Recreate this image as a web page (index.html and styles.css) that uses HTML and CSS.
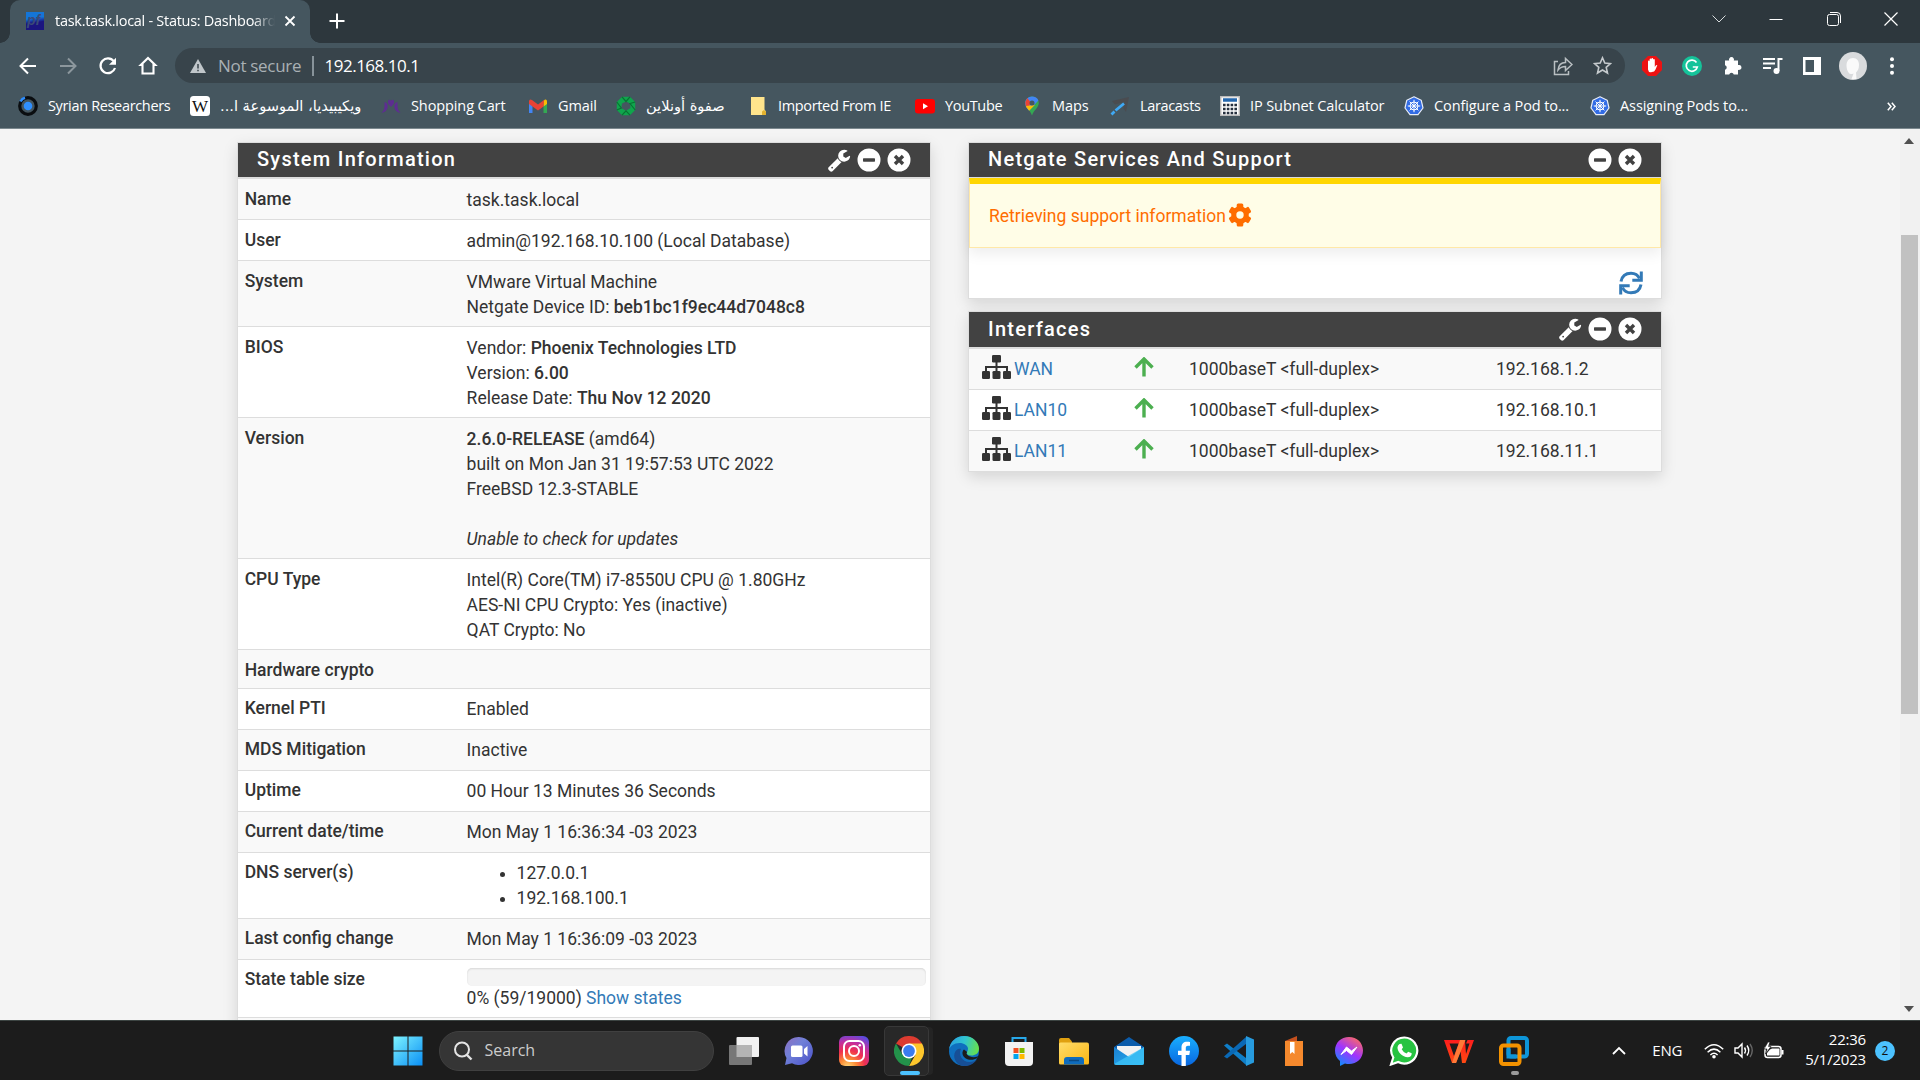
FILE: index.html
```html
<!DOCTYPE html>
<html lang="en">
<head>
<meta charset="utf-8">
<title>task.task.local - Status: Dashboard</title>
<link rel="stylesheet" href="styles.css">
</head>
<body>
<svg class="sprite" aria-hidden="true">
  <defs>
    <linearGradient id="g-win" x1="0" y1="0" x2="1" y2="1"><stop offset="0" stop-color="#7df3ff"/><stop offset="1" stop-color="#0a8ff5"/></linearGradient>
    <linearGradient id="g-chat" x1="0" y1="0" x2="1" y2="1"><stop offset="0" stop-color="#8f6fc0"/><stop offset=".4" stop-color="#7080d8"/><stop offset="1" stop-color="#4a50c8"/></linearGradient>
    <radialGradient id="g-insta" cx=".3" cy="1.05" r="1.15"><stop offset="0" stop-color="#ffdc7d"/><stop offset=".25" stop-color="#fb8c35"/><stop offset=".5" stop-color="#f0304f"/><stop offset=".75" stop-color="#c22fa0"/><stop offset="1" stop-color="#5a4be0"/></radialGradient>
    <linearGradient id="g-edge" x1="0" y1=".3" x2="1" y2=".5"><stop offset="0" stop-color="#2a9fe0"/><stop offset=".5" stop-color="#30c5cf"/><stop offset="1" stop-color="#66e04d"/></linearGradient>
    <linearGradient id="g-folder" x1="0" y1="0" x2="1" y2="1"><stop offset="0" stop-color="#ffdc6a"/><stop offset="1" stop-color="#fbb713"/></linearGradient>
    <linearGradient id="g-mail" x1="0" y1="0" x2="1" y2="1"><stop offset="0" stop-color="#1b7fd0"/><stop offset="1" stop-color="#27b1f2"/></linearGradient>
    <linearGradient id="g-fb" x1="0" y1="0" x2="0" y2="1"><stop offset="0" stop-color="#19afff"/><stop offset="1" stop-color="#0866e0"/></linearGradient>
    <linearGradient id="g-mess" x1=".2" y1="1" x2=".8" y2="0"><stop offset="0" stop-color="#0a8fff"/><stop offset=".5" stop-color="#a033ff"/><stop offset="1" stop-color="#ff6b60"/></linearGradient>
    <linearGradient id="g-pf" x1="0" y1="0" x2=".15" y2="1"><stop offset=".4" stop-color="#1475d8"/><stop offset=".65" stop-color="#1b1580"/></linearGradient>
    <linearGradient id="g-wps" x1="0" y1="0" x2="0" y2="1"><stop offset="0" stop-color="#ff1d1d"/><stop offset="1" stop-color="#ff4a12"/></linearGradient>
  </defs>
  <symbol id="wrench" viewBox="0 0 1792 1792"><path d="M448 1472q0-26-19-45t-45-19-45 19-19 45 19 45 45 19 45-19 19-45zm644-420l-682 682q-37 37-90 37-52 0-91-37l-106-108q-38-36-38-90 0-53 38-91l681-681q39 98 114.5 173.5t173.5 114.5zm634-435q0 39-23 106-47 134-164.5 217.5t-258.5 83.5q-185 0-316.5-131.5t-131.5-316.5 131.5-316.5 316.5-131.5q58 0 121.5 16.5t107.5 46.5q16 11 16 28t-16 28l-293 169v224l193 107q5-3 79-48.5t135.5-81 70.5-35.5q15 0 23.5 10t8.5 25z"/></symbol>
  <symbol id="minus" viewBox="0 0 24 24"><path fill-rule="evenodd" d="M12 .5a11.5 11.5 0 1 0 0 23 11.5 11.5 0 0 0 0-23zM6.6 10.300h10.800q.6 0 .6.6v2.200q0 .6-.6.6H6.600q-.6 0-.6-.6v-2.200q0-.6.6-.6z"/></symbol>
  <symbol id="times" viewBox="0 0 24 24"><circle cx="12" cy="12" r="11.5"/><path d="M8 8l8 8M16 8l-8 8" stroke="#424242" stroke-width="3.4"/></symbol>
  <symbol id="sitemap" viewBox="0 0 29 24"><g fill="#333"><rect x="10" y="0" width="9" height="7.500" rx="1.3"/><rect x="0" y="16" width="8" height="8" rx="1.3"/><rect x="10.500" y="16" width="8" height="8" rx="1.300"/><rect x="21" y="16" width="8" height="8" rx="1.3"/></g><path d="M14.500 6v11M4 17v-5h21v5" fill="none" stroke="#333" stroke-width="2"/></symbol>
  <symbol id="arrow-up" viewBox="0 0 20 20"><path d="M10 19.500V3M1.500 10.500L10 2l8.500 8.500" fill="none" stroke="#4caf50" stroke-width="3.400"/></symbol>
  <symbol id="gear" viewBox="0 0 24 24"><g fill="#ff6d00"><circle cx="12" cy="12" r="8.800"/><rect x="8.700" y=".5" width="6.600" height="23" rx="1.500"/><rect x="8.700" y=".5" width="6.600" height="23" rx="1.500" transform="rotate(60 12 12)"/><rect x="8.700" y=".5" width="6.600" height="23" rx="1.500" transform="rotate(120 12 12)"/></g><circle cx="12" cy="12" r="3.700" fill="#fffde7"/></symbol>
  <symbol id="refresh" viewBox="0 0 24 24"><g fill="none" stroke="#337ab7" stroke-width="3"><path d="M2 10.500C3 5 7 2.200 12 2.200c4 0 7 2 8.500 5.300"/><path d="M22.300.5v8.800h-9"/><path d="M22 13.500c-1 5.500-5 8.300-10 8.300-4 0-7-2-8.500-5.300"/><path d="M1.700 23.500v-8.800h9"/></g></symbol>
  <symbol id="k8s" viewBox="0 0 20 20"><path d="M10 .8l7.200 3.400L19 12l-5 6.600H6L1 12l1.800-7.800z" fill="#326ce5" stroke="#e8edf7" stroke-width="1.200" stroke-linejoin="round"/><g stroke="#fff" fill="none" stroke-width="1"><circle cx="10" cy="10" r="4"/><path d="M10 3.800v12.400M3.800 10h12.400M5.600 5.600l8.800 8.800M14.400 5.600l-8.800 8.800"/></g></symbol>
</svg>

<header class="browser">
  <div class="tabstrip">
    <div class="tab">
      <svg class="favicon" width="18" height="18" viewBox="0 0 18 18"><rect width="18" height="18" fill="url(#g-pf)"/><text x="1" y="13" font-family="Liberation Sans" font-size="14" font-weight="bold" font-style="italic" fill="#3a4a78">pf</text></svg>
      <span class="tab-title">task.task.local - Status: Dashboard</span>
      <svg class="tab-close" width="12" height="12" viewBox="0 0 12 12"><path d="M1.500 1.500l9 9M10.500 1.500l-9 9" stroke="#fff" stroke-width="1.800"/></svg>
    </div>
    <svg class="new-tab" width="16" height="16" viewBox="0 0 16 16"><path d="M8 .5v15M.5 8h15" stroke="#fff" stroke-width="2"/></svg>
    <div class="window-buttons">
      <svg width="14" height="10" viewBox="0 0 14 10"><path d="M.5 1.500L7 8l6.500-6.500" fill="none" stroke="#d8dcde"/></svg>
      <svg width="14" height="14" viewBox="0 0 14 14"><path d="M.5 7.500h13" stroke="#fff"/></svg>
      <svg width="14" height="14" viewBox="0 0 14 14"><g fill="none" stroke="#fff"><rect x=".5" y="2.500" width="11" height="11" rx="2"/><path d="M3 .5h7q3.500 0 3.500 3.500v7"/></g></svg>
      <svg width="14" height="14" viewBox="0 0 14 14"><path d="M.5 .5l13 13M13.500 .5l-13 13" stroke="#fff" stroke-width="1.200"/></svg>
    </div>
  </div>
  <div class="toolbar">
    <div class="nav">
      <svg width="20" height="20" viewBox="0 0 20 20"><path d="M18 10H3M10 2.500L2.500 10l7.500 7.500" fill="none" stroke="#fff" stroke-width="2"/></svg>
      <svg width="20" height="20" viewBox="0 0 20 20"><path d="M2 10h15M10 2.500l7.500 7.500-7.500 7.500" fill="none" stroke="#8c979d" stroke-width="2"/></svg>
      <svg width="20" height="20" viewBox="0 0 20 20"><path d="M15.800 5.200A7.400 7.400 0 1 0 17 12" fill="none" stroke="#fff" stroke-width="2.200"/><path d="M18 1.800v7h-7z" fill="#fff"/></svg>
      <svg width="20" height="20" viewBox="0 0 20 20"><path d="M4.500 17.500V9H2.800L10 2l7.200 7h-1.700v8.500z" fill="none" stroke="#fff" stroke-width="2.100"/></svg>
    </div>
    <div class="omnibox">
      <svg class="warn" width="16" height="14" viewBox="0 0 16 14"><path d="M8 0l8 14H0z" fill="#c0c6ca"/><path d="M8 5v4.500M8 10.700v1.600" stroke="#38444b" stroke-width="1.500"/></svg>
      <span class="insecure">Not secure</span>
      <span class="divider"></span>
      <span class="url">192.168.10.1</span>
      <svg class="share" width="20" height="20" viewBox="0 0 20 20"><g fill="none" stroke="#b9bfc2" stroke-width="1.500"><path d="M5 5.500H1.500v13h14V15"/><path d="M5 14c.5-5 3-7.500 7.500-7.500V2.500l6.500 6-6.500 6v-4C9 10.500 7 11.500 5 14z"/></g></svg>
      <svg class="star" width="19" height="19" viewBox="0 0 19 19"><path d="M9.500 1.800l2.300 5.300 5.700.5-4.300 3.800 1.300 5.600-5-3-5 3 1.300-5.600L1.500 7.600l5.700-.5z" fill="none" stroke="#c5cacd" stroke-width="1.600"/></svg>
    </div>
    <div class="extensions">
      <svg width="20" height="20" viewBox="0 0 20 20"><path d="M6 0h8l6 6v8l-6 6H6l-6-6V6z" fill="#ed1212"/><path d="M6 10V5.500q0-1 .8-1t.8 1V9V3.600q0-1 .9-1t.9 1V8.500V3q0-1 .9-1t.9 1v6-5q0-1 .8-1t.8 1v7l1-1.500q1-1 1.500-.2l-1.800 4.200q-1 2.500-3.600 2.500Q6.500 17 6 13.500z" fill="#fff"/></svg>
      <svg width="20" height="20" viewBox="0 0 20 20"><circle cx="10" cy="10" r="10" fill="#15c39a"/><path d="M14.500 6.500a5.600 5.600 0 1 0 .8 4.500h-4.500" fill="none" stroke="#fff" stroke-width="1.700"/></svg>
      <svg width="20" height="20" viewBox="0 0 20 20"><path d="M2 4.500h4.200a2.500 2.500 0 1 1 4.600 0H15v4.600a2.500 2.500 0 1 1 0 4.600V18.500h-4.200a2.400 2.400 0 0 0-4.600 0H2v-4.700a2.400 2.400 0 0 0 0-4.600z" fill="#fff"/></svg>
      <svg width="20" height="18" viewBox="0 0 20 18"><path d="M0 2h12M0 6.500h12M0 11h8M15.500 14V2h4" fill="none" stroke="#fff" stroke-width="2"/><circle cx="13.500" cy="14" r="3" fill="#fff"/></svg>
      <svg width="18" height="18" viewBox="0 0 18 18"><path fill-rule="evenodd" fill="#fff" d="M0 0h18v18H0zM2.500 3v12H11V3z"/></svg>
      <svg class="avatar" width="28" height="28" viewBox="0 0 28 28"><circle cx="14" cy="14" r="14" fill="#d9dbdd"/><path d="M14 6c4 0 6 3 6 7s-1.500 6-3 7.500l.5 6.500h-5l2-5.500q-3.500 1.500-5-1c-1.200-2-2-4-2-7C7.500 9 10 6 14 6z" fill="#fafafa"/></svg>
      <svg width="4" height="18" viewBox="0 0 4 18"><g fill="#fff"><circle cx="2" cy="2.200" r="2"/><circle cx="2" cy="9" r="2"/><circle cx="2" cy="15.800" r="2"/></g></svg>
    </div>
  </div>
  <nav class="bookmarks">
    <a class="bm tight"><svg width="20" height="20" viewBox="0 0 20 20"><circle cx="10" cy="10" r="8.300" fill="none" stroke="#0a0d10" stroke-width="3.200"/><circle cx="10" cy="10" r="4.300" fill="#2f8fff"/><path d="M2.500 5.500Q4 2.500 7 1.700" stroke="#2f8fff" stroke-width="2.600" fill="none"/></svg><span>Syrian Researchers</span></a>
    <a class="bm"><svg width="20" height="20" viewBox="0 0 20 20"><rect width="20" height="20" rx="3.500" fill="#fff"/><text x="10" y="15.500" text-anchor="middle" font-family="Liberation Serif" font-size="17" fill="#111">W</text></svg><span class="ar" dir="rtl">ويكيبيديا، الموسوعة ا...</span></a>
    <a class="bm"><svg width="20" height="20" viewBox="0 0 20 20"><g fill="#5d2d91"><path d="M3.500 6q4 1 3 6-1 4-6 5 3-3 3-6zM16.500 6q-4 1-3 6 1 4 6 5-3-3-3-6z"/><path d="M10 11Q5.500 7 7.500 4q1.500-.8 2.500 1 1-1.800 2.500-1 2 3-2.500 7z"/></g></svg><span>Shopping Cart</span></a>
    <a class="bm"><svg width="20" height="20" viewBox="0 0 20 20"><path d="M1 17V5h3.500v12z" fill="#4285f4"/><path d="M15.500 17V5H19v12z" fill="#34a853"/><path d="M15.500 5l1.500-1.500q2-.5 2 2V8l-3.500 2.500z" fill="#fbbc04"/><path d="M1 8V5.500q0-3 3-1.600l6 4.600 6-4.600-.5 6.600L10 14.500 4.500 10.500z" fill="#ea4335"/></svg><span>Gmail</span></a>
    <a class="bm"><svg width="20" height="20" viewBox="0 0 20 20"><path fill-rule="evenodd" d="M6 .8h8L19.200 6v8L14 19.200H6L.8 14V6zM10 5.500L6 7.500 5.300 12 10 14.800l4.500-2.800L14 7.500z" fill="#0fa54c"/><path d="M6 .8l4 4.700 4-4.700M19.200 6L14 7.500l5.200 6.500M14 19.200l-4-4.400-4 4.400M.8 14l4.500-2L.8 6" fill="none" stroke="#087233" stroke-width="1.200"/></svg><span class="ar" dir="rtl">صفوة أونلاين</span></a>
    <a class="bm tight"><svg width="20" height="20" viewBox="0 0 20 20"><path d="M3 1h13.500v12.500l1.500 2V19H3z" fill="#ffe48c"/><path d="M14 19v-3.500l2-1.500 2 1.500V19z" fill="#e3b22f"/></svg><span>Imported From IE</span></a>
    <a class="bm tight"><svg width="20" height="20" viewBox="0 0 20 20"><rect y="3" width="20" height="14.500" rx="3" fill="#f00"/><path d="M8 7.300v6l5-3z" fill="#fff"/></svg><span>YouTube</span></a>
    <a class="bm"><svg width="20" height="20" viewBox="0 0 20 20"><path d="M10 .5C6 .5 3.200 3.500 3.200 7c0 4.500 5 7 6.800 12.500C11.800 14 16.800 11.500 16.800 7 16.800 3.500 14 .5 10 .5z" fill="#34a853"/><path d="M10 .5c3 0 5.500 1.600 6.400 4L7 14.500Q3.200 11 3.200 7C3.200 3.500 6 .5 10 .5z" fill="#4285f4"/><path d="M3.300 6l2-4 4 5L5 12.300Q3 9 3.300 6z" fill="#ea4335"/><path d="M3.800 10l9-1-5.600 5.700Q5 12.500 3.800 10z" fill="#fbbc04"/><circle cx="10" cy="7" r="2.500" fill="#45565f"/></svg><span>Maps</span></a>
    <a class="bm tight"><svg width="20" height="20" viewBox="0 0 20 20"><path d="M2 5L19 1l-3 15-2.500-3.500L14.500 6 5 8.500z" fill="#4a4c50"/><path d="M1.500 18.500l3-3M5.500 14.500L14 7.500" stroke="#3fa9f5" stroke-width="2.800"/></svg><span>Laracasts</span></a>
    <a class="bm"><svg width="20" height="20" viewBox="0 0 20 20"><rect x=".7" y=".7" width="18.600" height="18.600" fill="#fff" stroke="#b9b9b9" stroke-width="1.400"/><path d="M3 4h14" stroke="#2467ae" stroke-width="3.500"/><path d="M3 9h14M3 13h14M3 17h14" stroke="#26303e" stroke-width="2.600" stroke-dasharray="2.600 1.200"/></svg><span>IP Subnet Calculator</span></a>
    <a class="bm"><svg width="20" height="20"><use href="#k8s"/></svg><span>Configure a Pod to...</span></a>
    <a class="bm"><svg width="20" height="20"><use href="#k8s"/></svg><span>Assigning Pods to...</span></a>
    <svg class="more" width="9" height="9" viewBox="0 0 9 9"><path d="M.8 .8l3.200 3.700L.8 8.200M4.800 .8L8 4.500 4.800 8.200" fill="none" stroke="#fff" stroke-width="1.500"/></svg>
  </nav>
</header>

<div class="viewport">
  <main class="page">
    <div class="column">
      <section class="panel">
        <h2 class="panel-head"><span>System Information</span><span class="tools"><svg width="24" height="24"><use href="#wrench"/></svg><svg width="24" height="24"><use href="#minus"/></svg><svg width="24" height="24"><use href="#times"/></svg></span></h2>
        <table class="info">
          <tr><th>Name</th><td>task.task.local</td></tr>
          <tr><th>User</th><td>admin@192.168.10.100 (Local Database)</td></tr>
          <tr><th>System</th><td>VMware Virtual Machine<br>Netgate Device ID: <b>beb1bc1f9ec44d7048c8</b></td></tr>
          <tr><th>BIOS</th><td>Vendor: <b>Phoenix Technologies LTD</b><br>Version: <b>6.00</b><br>Release Date: <b>Thu Nov 12 2020</b></td></tr>
          <tr><th>Version</th><td><b>2.6.0-RELEASE</b> (amd64)<br>built on Mon Jan 31 19:57:53 UTC 2022<br>FreeBSD 12.3-STABLE<br><br><i>Unable to check for updates</i></td></tr>
          <tr><th>CPU Type</th><td>Intel(R) Core(TM) i7-8550U CPU @ 1.80GHz<br>AES-NI CPU Crypto: Yes (inactive)<br>QAT Crypto: No</td></tr>
          <tr><th>Hardware crypto</th><td></td></tr>
          <tr><th>Kernel PTI</th><td>Enabled</td></tr>
          <tr><th>MDS Mitigation</th><td>Inactive</td></tr>
          <tr><th>Uptime</th><td>00 Hour 13 Minutes 36 Seconds</td></tr>
          <tr><th>Current date/time</th><td>Mon May 1 16:36:34 -03 2023</td></tr>
          <tr><th>DNS server(s)</th><td><ul><li>127.0.0.1</li><li>192.168.100.1</li></ul></td></tr>
          <tr><th>Last config change</th><td>Mon May 1 16:36:09 -03 2023</td></tr>
          <tr class="states"><th>State table size</th><td><div class="progress"></div>0% (59/19000) <a class="link">Show states</a></td></tr>
          <tr><th></th><td></td></tr>
        </table>
      </section>
    </div>
    <div class="column">
      <section class="panel">
        <h2 class="panel-head"><span>Netgate Services And Support</span><span class="tools"><svg width="24" height="24"><use href="#minus"/></svg><svg width="24" height="24"><use href="#times"/></svg></span></h2>
        <div class="alert"><span>Retrieving support information</span><svg width="24" height="24"><use href="#gear"/></svg></div>
        <div class="panel-foot"><svg width="24" height="24"><use href="#refresh"/></svg></div>
      </section>
      <section class="panel">
        <h2 class="panel-head tall"><span>Interfaces</span><span class="tools"><svg width="24" height="24"><use href="#wrench"/></svg><svg width="24" height="24"><use href="#minus"/></svg><svg width="24" height="24"><use href="#times"/></svg></span></h2>
        <ul class="interfaces">
          <li><span class="ifname"><svg width="29" height="24"><use href="#sitemap"/></svg><a class="link">WAN</a></span><svg width="20" height="20"><use href="#arrow-up"/></svg><span>1000baseT &lt;full-duplex&gt;</span><span>192.168.1.2</span></li>
          <li><span class="ifname"><svg width="29" height="24"><use href="#sitemap"/></svg><a class="link">LAN10</a></span><svg width="20" height="20"><use href="#arrow-up"/></svg><span>1000baseT &lt;full-duplex&gt;</span><span>192.168.10.1</span></li>
          <li><span class="ifname"><svg width="29" height="24"><use href="#sitemap"/></svg><a class="link">LAN11</a></span><svg width="20" height="20"><use href="#arrow-up"/></svg><span>1000baseT &lt;full-duplex&gt;</span><span>192.168.11.1</span></li>
        </ul>
      </section>
    </div>
  </main>
  <div class="scrollbar">
    <svg width="10" height="6" viewBox="0 0 10 6"><path d="M0 6l5-6 5 6z" fill="#505050"/></svg>
    <div class="thumb"></div>
    <svg class="down" width="10" height="6" viewBox="0 0 10 6"><path d="M0 0h10L5 6z" fill="#505050"/></svg>
  </div>
</div>

<footer class="taskbar">
  <svg class="start" width="30" height="30" viewBox="0 0 30 30"><path d="M.5 .5h14v14H.5zM15.500 .5h14v14h-14zM.5 15.500h14v14H.5zM15.500 15.500h14v14h-14z" fill="url(#g-win)"/></svg>
  <div class="search"><svg width="20" height="20" viewBox="0 0 20 20"><circle cx="9" cy="8.500" r="7" fill="none" stroke="#e4e4e4" stroke-width="2"/><path d="M13.500 13.500l5 5" stroke="#e4e4e4" stroke-width="2.400"/></svg><span>Search</span></div>
  <div class="apps">
    <span class="app"><svg width="30" height="30" viewBox="0 0 30 30"><rect x="7.500" y="1" width="22.500" height="20" rx="1" fill="#f1f1f1"/><rect x="0" y="9" width="23" height="20" rx="1" fill="#777"/><path d="M7.500 9H23v12H7.500z" fill="#b4b4b4"/></svg></span>
    <span class="app"><svg width="30" height="30" viewBox="0 0 30 30"><path d="M15 1a14 14 0 1 1-7 26.200L1 29l1.500-7A14 14 0 0 1 15 1z" fill="url(#g-chat)"/><rect x="7" y="9.500" width="11.500" height="11.500" rx="1.500" fill="#fff"/><path d="M20 13l3.500-3v10.500L20 17.500z" fill="#fff"/></svg></span>
    <span class="app"><svg width="30" height="30" viewBox="0 0 30 30"><rect width="30" height="30" rx="6" fill="url(#g-insta)"/><g fill="none" stroke="#fff" stroke-width="2"><rect x="5" y="5" width="20" height="20" rx="5.500"/><circle cx="15" cy="15" r="5"/></g><circle cx="20.800" cy="9.200" r="1.300" fill="#fff"/></svg></span>
    <span class="app active"><svg width="30" height="30" viewBox="0 0 30 30"><path d="M15 15L2 7.500A15 15 0 0 1 28 7.500z" fill="#dd3b30"/><path d="M15 15V7.500h13A15 15 0 0 1 15 30l6.500-11.300z" fill="#fdc62c"/><path d="M2 7.500L8.500 18.700 15 22l3-.5L15 30A15 15 0 0 1 2 7.500z" fill="#23924a"/><circle cx="15" cy="15" r="7.500" fill="#fff"/><circle cx="15" cy="15" r="5.900" fill="#3b7cf0"/></svg></span>
    <span class="app"><svg width="30" height="30" viewBox="0 0 30 30"><circle cx="15" cy="15" r="15" fill="#0f6fbe"/><path d="M0 14C1 5 7.500 0 15 0c9 0 15 6.500 15 12.500 0 5-4 7-7.500 7s-5-1.500-5-2.500 1.500-1.500 1.500-4.500S15 7 10.500 7C5 7 1 10 0 14z" fill="url(#g-edge)"/><path d="M12 13c-3 5 1 13 8.500 13 3 0 6-1.500 7.500-2.800C25 28 20 30 15.500 30 8 30 4 23 5.500 17.500 6.500 14 9.500 12 12 13z" fill="#174f96"/><path d="M15 13.500c-2.500 2-2 6.500 1.500 8.800 4.500 2.800 9 1.200 11.500-.1l1-1.200q.5-1-.5-.5c-4 1.500-8 .5-10-1.500-1.500-1.500-1-2-.3-3z" fill="#1c1c1c"/></svg></span>
    <span class="app"><svg width="30" height="30" viewBox="0 0 30 30"><path d="M8.500 8V2h13v6" fill="none" stroke="#27a8ea" stroke-width="2"/><path d="M1 6h28v20q0 4-4 4H5q-4 0-4-4z" fill="#f2f2f2"/><path d="M9.500 12h5v5h-5z" fill="#f25022"/><path d="M15.500 12h5v5h-5z" fill="#7fba00"/><path d="M9.500 18h5v5h-5z" fill="#00a4ef"/><path d="M15.500 18h5v5h-5z" fill="#ffb900"/></svg></span>
    <span class="app"><svg width="30" height="30" viewBox="0 0 30 30"><path d="M0 4q0-2 2-2h8l3 3.500V10H0z" fill="#e0a010"/><path d="M0 8q0-1.500 1.500-1.500H28q2 0 2 2V27q0 1.500-1.500 1.500h-27Q0 28.500 0 27z" fill="url(#g-folder)"/><path d="M5 28.500V24q0-3 3-3h14q3 0 3 3v4.500z" fill="#0f6cbd"/><path d="M10 24.500h10" stroke="#0a4a85" stroke-width="1.500"/></svg></span>
    <span class="app"><svg width="30" height="30" viewBox="0 0 30 30"><path d="M0 11L15 1l15 10v5H0z" fill="#0b5cab"/><path d="M3 10h24v12H3z" fill="#f2f2f2"/><path d="M0 11l15 10 15-10v16q0 2-2 2H2q-2 0-2-2z" fill="url(#g-mail)"/><path d="M0 28L30 11v16q0 2-2 2H2z" fill="#3fc4f7" opacity=".75"/></svg></span>
    <span class="app"><svg width="30" height="30" viewBox="0 0 30 30"><circle cx="15" cy="15" r="15" fill="url(#g-fb)"/><path d="M12.500 30V19H9v-4.300h3.500v-3c0-4.200 2.200-6 5.500-6 1.500 0 2.500.2 3 .3v3.700h-2c-1.800 0-2.200 1-2.200 2.400v2.600H21l-.7 4.300h-3.500V30z" fill="#fff"/></svg></span>
    <span class="app"><svg width="30" height="30" viewBox="0 0 30 30"><path d="M0 9.500l3-2L22 22v7z" fill="#0f7ec8"/><path d="M0 20.500l3 2L22 8V1z" fill="#0a68b4"/><path d="M22 0l8 3.500v23L22 30z" fill="#279bde"/></svg></span>
    <span class="app"><svg width="30" height="30" viewBox="0 0 30 30"><path d="M6 5L18 0v6z" fill="#c4501e"/><path d="M6 5h18v25H6z" fill="#f5892d"/><path d="M11 6h4.500v12l-2.200-2-2.300 2z" fill="#fff"/></svg></span>
    <span class="app"><svg width="30" height="30" viewBox="0 0 30 30"><path d="M15 1c8 0 14 5.800 14 13.500S23 28 15 28q-2 0-4-.5L6 30v-5C2.500 22.500 1 18.500 1 14.500 1 6.800 7 1 15 1z" fill="url(#g-mess)"/><path d="M7 18.500l5.500-7.500 5 4 5.500-4-5.500 7.500-5-4z" fill="#fff" stroke="#fff"/></svg></span>
    <span class="app"><svg width="30" height="30" viewBox="0 0 30 30"><path d="M15.500 1.500a13 13 0 1 1-6.300 24.500L2 28.500l2.300-7A13 13 0 0 1 15.500 1.500z" fill="#27c341" stroke="#fff" stroke-width="2.200"/><path d="M10.500 8l2-.2 1.500 3.700-1.300 1.700q1.500 3 4.800 4.300l1.700-1.800 3.500 1.600q0 4-4 4c-5 0-10.500-5.500-10.200-10q.2-2 2-3.300z" fill="#fff"/></svg></span>
    <span class="app"><svg width="30" height="30" viewBox="0 0 30 30"><path d="M0 4h16l-1 3.500H5.500L10 20l6-16h5l1 14 3.500-10.500H22L23.500 4H30L21.500 27H18L16.500 15 12 27H8z" fill="url(#g-wps)"/><path d="M16 4h5.500L12 27H8z" fill="#ff7a38"/></svg></span>
    <span class="app running"><svg width="30" height="30" viewBox="0 0 30 30"><rect x="9.500" y="2" width="18.500" height="18.500" rx="2.500" fill="none" stroke="#0d95d8" stroke-width="4"/><rect x="2" y="9.500" width="18.500" height="18.500" rx="2.500" fill="none" stroke="#f39200" stroke-width="4"/><path d="M9.500 13v7.500H17" fill="none" stroke="#0d95d8" stroke-width="4"/></svg></span>
  </div>
  <div class="tray">
    <svg class="up" width="14" height="9" viewBox="0 0 14 9"><path d="M1 8l6-6 6 6" fill="none" stroke="#fff" stroke-width="1.800"/></svg>
    <span class="lang">ENG</span>
    <svg class="wifi" width="20" height="16" viewBox="0 0 20 16"><g fill="none" stroke="#fff" stroke-width="1.500"><path d="M.8 6.200q9.200-9 18.400 0M3.600 9.200q6.400-6.200 12.800 0M6.400 12q3.600-3.500 7.200 0"/></g><circle cx="10" cy="13.700" r="1.800" fill="#fff"/></svg>
    <svg class="vol" width="20" height="17" viewBox="0 0 20 17"><g fill="none" stroke="#fff" stroke-width="1.400"><path d="M1 6h3l4-4v13l-4-4H1z"/><path d="M10.500 5.500q2 3 0 6M13 3.500q3.500 5 0 10"/></g><path d="M16 2q4.500 6.500 0 13" fill="none" stroke="#666" stroke-width="1.400"/></svg>
    <svg class="bat" width="20" height="17" viewBox="0 0 20 17"><rect x="1" y="4.500" width="16" height="11" rx="2.500" fill="none" stroke="#fff" stroke-width="1.500"/><path d="M6 7.500L8 6.500h7.500v7H3V11zM17.500 8h2v4.500h-2z" fill="#fff"/><path d="M4 0L0 7h3l-1.500 5L7 4.500H4.500L6 0z" fill="#fff" stroke="#1c1c1c" stroke-width=".7"/></svg>
    <div class="clock"><span>22:36</span><span>5/1/2023</span></div>
    <span class="badge">2</span>
  </div>
</footer>
</body>
</html>
```
FILE: styles.css
```css
* { box-sizing: border-box; }
html, body { margin: 0; height: 100%; }
body {
  width: 1920px; height: 1080px; overflow: hidden;
  display: flex; flex-direction: column;
  font-family: Roboto, "Liberation Sans", sans-serif;
  font-size: 17.5px; line-height: 25px; color: #333;
}
svg { display: block; flex: none; }
.sprite { position: absolute; width: 0; height: 0; }

/* Browser chrome */
.browser { flex: none; height: 129px; background: #45565f; color: #fff; border-bottom: 1px solid #7b888e; font-family: "Open Sans", "Noto Sans", sans-serif; white-space: nowrap; }
.tabstrip { height: 43px; background: #2d373d; display: flex; align-items: center; padding-left: 10px; }
.tab { width: 300px; height: 43px; padding: 0 14px 2px 16px; background: #45565f; border-radius: 10px 10px 0 0; display: flex; align-items: center; position: relative; }
.tab::before, .tab::after { content: ""; position: absolute; bottom: 0; width: 10px; height: 10px; }
.tab::before { left: -10px; background: radial-gradient(circle at 0 0, transparent 9.5px, #45565f 10px); }
.tab::after { right: -10px; background: radial-gradient(circle at 100% 0, transparent 9.5px, #45565f 10px); }
.tab-title { width: 220px; margin-left: 11px; font-size: 14.5px; letter-spacing: -.28px; overflow: hidden; -webkit-mask-image: linear-gradient(90deg, #000 198px, transparent 220px); mask-image: linear-gradient(90deg, #000 198px, transparent 220px); }
.tab-close { margin-left: 9px; }
.new-tab { margin-left: 19px; margin-bottom: 1px; }
.window-buttons { margin-left: auto; margin-right: 22px; margin-bottom: 6px; display: flex; align-items: center; gap: 43.500px; }
.toolbar { height: 45px; display: flex; align-items: center; }
.nav { display: flex; gap: 20px; margin-left: 18px; width: 157px; }
.omnibox { width: 1450px; height: 35px; border-radius: 18px; background: #38444b; display: flex; align-items: center; padding-left: 15px; font-size: 17px; }
.insecure { margin-left: 12px; width: 94px; color: #a9b0b4; letter-spacing: -.3px; }
.divider { width: 1.500px; height: 20px; background: #87939a; margin-right: 11px; }
.url { letter-spacing: -.5px; }
.share { margin-left: auto; }
.star { margin: 0 13px 0 20px; }
.extensions { margin-left: 17px; width: 252px; display: flex; align-items: center; justify-content: space-between; }
.avatar { margin: 0 3px 0 -3px; }
.bookmarks { height: 36px; padding-left: 18px; display: grid; grid-template-columns: 172px 191px 147px 88px 132px 167px 107px 88px 110px 184px 186px 297px 9px; align-items: center; }
.bm { display: flex; align-items: center; gap: 10px; font-size: 14.500px; letter-spacing: -.1px; }
.bm span { margin-top: -2px; }
.tight { letter-spacing: -.34px; }
.bm .ar { font-family: "DejaVu Sans", sans-serif; font-size: 14.600px; letter-spacing: 0; }

/* Dashboard */
.viewport { flex: none; height: 891px; display: flex; overflow: hidden; background: #f4f4f4; }
.page { flex: 1; padding: 13px 0 0 237px; display: flex; align-items: flex-start; gap: 37px; }
.column { width: 694px; display: flex; flex-direction: column; gap: 12px; }
.panel { border: 1px solid #ddd; background: #fff; box-shadow: 0 5px 14px rgba(0,0,0,.13); }
.panel-head { margin: 0; height: 35px; padding: 0 19px 1px; background: #424242; color: #fff; display: flex; align-items: center; justify-content: space-between; font-size: 20px; font-weight: 500; letter-spacing: 1.250px; border-bottom: 1px solid #ddd; }
.tall { height: 36px; }
.tools { display: flex; gap: 6px; fill: #fff; }
.info { width: 100%; border-collapse: collapse; table-layout: fixed; }
.info tr { border-top: 1px solid #ddd; }
.info tr:nth-child(odd) { background: #f9f9f9; }
.info th { width: 222px; padding: 6px 6px 6px 6.700px; font-weight: 500; text-align: left; vertical-align: top; line-height: 26px; }
.info td { padding: 8px 6px 7px 6.600px; vertical-align: top; }
.info tr:nth-child(-n+7) th { padding-top: 7px; padding-bottom: 5px; }
.info tr:nth-child(-n+7) td { padding-top: 9px; padding-bottom: 6px; }
.info .states td { padding-bottom: 6px; }
.info b { font-weight: 500; }
.info ul { margin: 0; padding-left: 50px; }
.progress { width: 459px; height: 18px; border-radius: 5px; background: #f4f4f4; box-shadow: inset 0 1px 2px rgba(0,0,0,.12); }
.link { color: #337ab7; }
.alert { height: 70px; padding-left: 19px; display: flex; align-items: center; gap: 2px; background: #fffde7; border: 1px solid #ffe8a8; border-top: 6px solid #ffd600; color: #ff6d00; box-shadow: 0 5px 14px rgba(0,0,0,.08); }
.alert span { padding-top: 1px; }
.alert svg { margin-top: -1px; }
.panel-foot { height: 50px; padding: 23px 18px 0; display: flex; justify-content: flex-end; }
.interfaces { margin: 0; padding: 0; list-style: none; }
.interfaces li { height: 41px; padding-left: 13px; border-top: 1px solid #ddd; background: #f9f9f9; display: grid; grid-template-columns: 152px 55px 307px 1fr; align-items: center; }
.interfaces li:nth-child(even) { background: #fff; }
.interfaces svg { margin-top: -4px; }
.ifname { display: flex; align-items: center; gap: 3px; }
.scrollbar { width: 20px; background: #f1f1f1; padding: 9px 0 8px; display: flex; flex-direction: column; align-items: center; }
.thumb { width: 17px; height: 479px; margin-top: 91px; margin-right: 2px; background: #c1c1c1; }
.scrollbar svg { margin-right: 2px; }
.scrollbar .down { margin-top: auto; }

/* Taskbar */
.taskbar { flex: none; height: 60px; background: #1c1c1c; border-top: 1px solid #3c4442; color: #fff; display: flex; align-items: center; padding-left: 392.500px; font-family: "Open Sans", "Noto Sans", sans-serif; font-size: 15px; }
.search { width: 275px; height: 40px; margin-left: 16px; border-radius: 20px; background: #353535; border: 1px solid #404040; display: flex; align-items: center; padding-left: 13px; gap: 12px; color: #ccc; font-size: 16px; }
.apps { display: flex; margin-left: 3px; }
.app { width: 55px; height: 50px; display: grid; place-items: center; position: relative; }
.active::before { content: ""; position: absolute; z-index: 0; inset: 0 8px 0 2px; border: 1px solid #383838; border-radius: 5px; background: #282828; box-shadow: 5px 0 0 -1px #242424; }
.active svg { position: relative; }
.active::after, .running::after { content: ""; position: absolute; bottom: 1px; border-radius: 2px; left: 18px; width: 20px; height: 4px; background: #4cc2ff; }
.running::after { left: 24px; width: 8px; background: #9a9a9a; }
.tray { flex: 1; display: flex; align-items: center; justify-content: flex-end; padding-right: 25px; }
.lang { margin: 0 22px 0 26px; letter-spacing: -.3px; }
.vol { margin: 0 10px; }
.clock { width: 82px; display: flex; flex-direction: column; align-items: flex-end; line-height: 20px; letter-spacing: -.2px; padding-bottom: 3px; }
.badge { width: 20px; height: 20px; margin-left: 9px; border-radius: 50%; background: #4cc2ff; color: #111; font-size: 12px; line-height: 20px; text-align: center; }
```
